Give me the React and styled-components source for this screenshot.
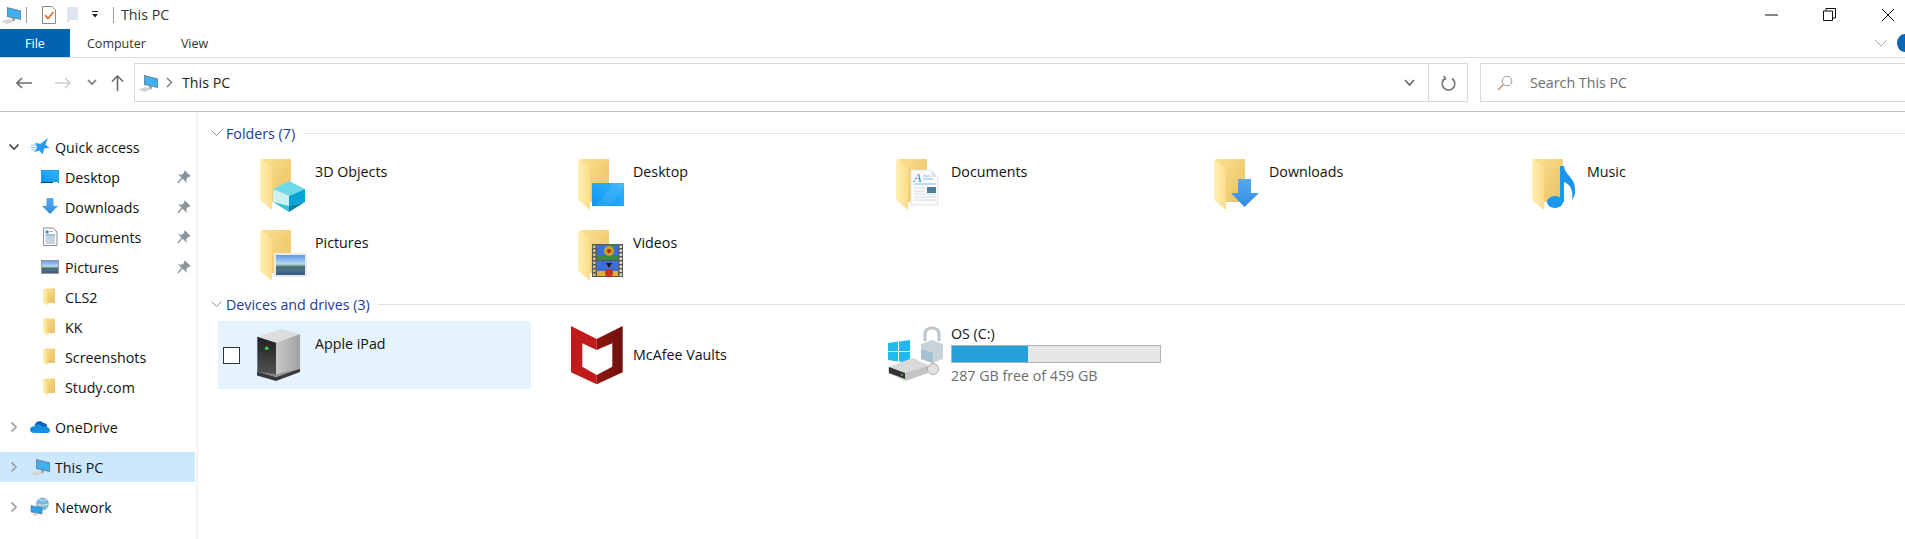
import React from 'react'
import styled, { createGlobalStyle } from 'styled-components'

const GlobalStyle = createGlobalStyle`
  html, body {
    margin: 0;
    padding: 0;
    background: #fff;
    overflow: hidden;
  }
  body {
    font-family: 'Open Sans', 'Noto Sans', sans-serif;
    color: #111;
  }
`

const Gradients = () => (
  <svg width='0' height='0' style={{ position: 'absolute' }}>
    <defs>
      <linearGradient id='fBack' x1='0' y1='0' x2='1' y2='1'>
        <stop offset='0' stopColor='#fbe08e' />
        <stop offset='1' stopColor='#e9c063' />
      </linearGradient>
      <linearGradient id='fFront' x1='0' y1='0' x2='1' y2='0'>
        <stop offset='0' stopColor='#fff0b5' />
        <stop offset='1' stopColor='#fbdc8a' />
      </linearGradient>
      <linearGradient id='screen' x1='0' y1='1' x2='1' y2='0'>
        <stop offset='0' stopColor='#0d96f2' />
        <stop offset='1' stopColor='#35b4fd' />
      </linearGradient>
      <linearGradient id='arrowBlue' x1='0' y1='0' x2='0' y2='1'>
        <stop offset='0' stopColor='#57a8ee' />
        <stop offset='1' stopColor='#2f8de4' />
      </linearGradient>
      <linearGradient id='photoSky' x1='0' y1='0' x2='0' y2='1'>
        <stop offset='0' stopColor='#5d9ae8' />
        <stop offset='.45' stopColor='#bcd8f0' />
        <stop offset='.6' stopColor='#46705f' />
        <stop offset='.75' stopColor='#4d6f95' />
        <stop offset='1' stopColor='#35587f' />
      </linearGradient>
      <linearGradient id='driveFace' x1='0' y1='0' x2='0' y2='1'>
        <stop offset='0' stopColor='#202020' />
        <stop offset='1' stopColor='#555' />
      </linearGradient>
      <linearGradient id='driveSide' x1='0' y1='0' x2='1' y2='0'>
        <stop offset='0' stopColor='#c8c8c8' />
        <stop offset='1' stopColor='#a2a2a2' />
      </linearGradient>
      <linearGradient id='vaultDark' x1='0' y1='0' x2='1' y2='0'>
        <stop offset='0' stopColor='#8f1610' />
        <stop offset='1' stopColor='#6f120d' />
      </linearGradient>
    </defs>
  </svg>
)

// ---- small drawings ----

const PcIcon = () => (
  <svg width='20' height='20' viewBox='0 0 20 20'>
    <path d='M0 16.5 L8 14 L14 16 L6 19 Z' fill='#d4d4d4' />
    <path d='M11 12.5 L14 13 L14 16 L11 15.5 Z' fill='#a8a8a8' />
    <path d='M6 2 L20 5.5 V15 L6 12 Z' fill='#6f8391' />
    <path d='M6.8 3.2 L19.2 6.2 V14 L6.8 11.2 Z' fill='#3fb0f0' />
  </svg>
)

const SmallFolder = () => (
  <svg width='20' height='20' viewBox='0 0 20 20'>
    <path d='M4 1.5 H15 V16 H7 Z' fill='url(#fBack)' />
    <path d='M3 1.5 L7.5 4 V18.5 L3 15.5 Z' fill='url(#fFront)' />
  </svg>
)

const DesktopSmall = () => (
  <svg width='20' height='20' viewBox='0 0 20 20'>
    <rect x='1' y='3' width='18' height='13' fill='#0f95ee' />
    <rect x='1.5' y='3.5' width='17' height='11' fill='url(#screen)' />
    <rect x='1' y='15' width='18' height='1' fill='#0a3f78' />
    <rect x='13' y='15' width='5' height='1' fill='#dff' />
  </svg>
)

const DownloadSmall = () => (
  <svg width='20' height='20' viewBox='0 0 20 20'>
    <path d='M6.5 1 H13.5 V9 H18 L10 17 L2 9 H6.5 Z' fill='url(#arrowBlue)' />
  </svg>
)

const DocumentSmall = () => (
  <svg width='20' height='20' viewBox='0 0 20 20'>
    <path d='M3.5 1 H13 L17 5 V18.5 H3.5 Z' fill='#fff' stroke='#8d8d8d' />
    <rect x='5.5' y='3.5' width='3' height='3' fill='#3f8fd6' />
    <path d='M9.5 4.5 H12.5 M5.5 8 H15 M5.5 10 H15 M5.5 12 H15 M5.5 14 H15 M5.5 16 H15' stroke='#8fa7c0' />
    <path d='M5.5 8 H15' stroke='#5cb2ee' />
  </svg>
)

const PictureSmall = () => (
  <svg width='20' height='20' viewBox='0 0 20 20'>
    <rect x='1.5' y='3.5' width='17' height='13' fill='url(#photoSky)' stroke='#9a9a9a' />
  </svg>
)

const PinIcon = () => (
  <svg width='14' height='14' viewBox='0 0 14 14'>
    <path d='M1 13 L5 8 M8 1.5 L12.5 6 L10.5 6.5 L8.5 9.5 L8.8 11 L3 5.2 L4.5 5.5 L7.5 3.5 Z' fill='#8b959d' stroke='#8b959d' strokeWidth='1.3' />
  </svg>
)

const StarIcon = () => (
  <svg width='20' height='20' viewBox='0 0 20 20'>
    <path d='M18 1 L15.5 7.5 L19.5 11 L14.5 11.2 L12.5 17.5 L9.5 13.5 L4 15 L7 10.5 L5 6 L10.5 6.8 Z' fill='#2a9bf0' />
    <path d='M1 8 H7 M.5 10.5 H6 M1.5 13 H6' stroke='#8fc8f2' strokeWidth='1' />
  </svg>
)

const CloudIcon = () => (
  <svg width='20' height='20' viewBox='0 0 20 20'>
    <path d='M4.5 9 C5 5 10 2.5 13.5 6 C15.5 6 17 7 17.3 9 L9 14 Z' fill='#0a5fb8' />
    <path d='M4 16 C1.5 16 0 14.5 0 12.6 C0 10.5 2 9 4.5 9.2 C7 6 11 7 12.5 9.8 C15 8.6 20 10 20 13.5 C20 15 19 16 17.5 16 Z' fill='#1490df' />
  </svg>
)

const NetworkIcon = () => (
  <svg width='20' height='20' viewBox='0 0 20 20'>
    <circle cx='12.5' cy='7' r='6.5' fill='#7fb7d9' />
    <path d='M9 2.5 C12 4 15 3 16.5 3 M7 7 C11 9 15 8 19 7' stroke='#dcecf5' fill='none' />
    <path d='M1 8.5 L12 11 V17 L1 15 Z' fill='#2aa1e8' stroke='#5b6b77' strokeWidth='.6' />
    <path d='M4 16 L9 17 L6 19 L2.5 18 Z' fill='#d6d6d6' />
  </svg>
)

const Chevron = ({ open, light }) => (
  <svg width='12' height='12' viewBox='0 0 12 12'>
    {open ? (
      <path d='M1.5 3.5 L6 8 L10.5 3.5' fill='none' stroke='#444' strokeWidth='1.6' />
    ) : (
      <path d='M3.5 1.5 L8 6 L3.5 10.5' fill='none' stroke={light ? '#a6a6a6' : '#777'} strokeWidth='1.8' />
    )}
  </svg>
)

// ---- big folder drawings ----

const Folder = ({ children }) => (
  <svg width='64' height='64' viewBox='0 0 64 64'>
    <path d='M11 7 H40 V50 H20 Z' fill='url(#fBack)' />
    <path d='M9 7 L21 15 V58 L9 48 Z' fill='url(#fFront)' />
    {children}
  </svg>
)

const cube = (
  <g>
    <path d='M38 29 L54 37 V52 L38 60 L22 52 V37 Z' fill='#fff' opacity='.3' />
    <path d='M22 37 L38 29 L54 37 L38 44 Z' fill='#6fd9e8' />
    <path d='M22 37 L38 44 V54 L22 50 Z' fill='#cdf0f2' />
    <path d='M54 37 L38 44 V54 L54 50 Z' fill='#05a5d4' />
    <path d='M22 50 L38 54 V60 Z' fill='#35c4dc' />
    <path d='M54 50 L38 54 V60 Z' fill='#0782ac' />
  </g>
)

const screenBig = (
  <g>
    <rect x='23' y='31' width='32' height='23' fill='url(#screen)' />
    <path d='M27 54 L44 31 H55 V35 L40 54 Z' fill='#fff' opacity='.08' />
  </g>
)

const docBig = (
  <g>
    <path d='M24 18 H44 L51 25 V53 H24 Z' fill='#fbfbfb' stroke='#dfe3e8' />
    <path d='M44 18 V25 H51 Z' fill='#e1e4e8' />
    <text x='26.5' y='30' fontSize='13' fontStyle='italic' fontFamily='Liberation Serif, serif' fill='#3a87d4'>A</text>
    <path d='M36 24 H43 M36 27 H46 M27 32 H49' stroke='#7cc0ee' strokeWidth='1' />
    <path d='M27 36 H38 M27 39 H38 M27 42 H49 M27 45 H49 M27 48 H49' stroke='#d5dbe2' strokeWidth='1' />
    <rect x='40' y='35' width='9' height='6' fill='#4f7b94' />
  </g>
)

const arrowBig = (
  <path d='M33 27 H46 V41 H54 L39.5 55 L26 41 H33 Z' fill='url(#arrowBlue)' />
)

const noteBig = (
  <g fill='#1a96ec'>
    <ellipse cx='32' cy='50' rx='8' ry='6' />
    <path d='M37 50 V14 H41 C42 24 54 26 52 41 C51.5 45 50 46 49 48 C50.5 38 47 32 41 30 V50 Z' />
  </g>
)

const photoBig = (
  <g>
    <rect x='23' y='30' width='33' height='24' fill='#e8eaec' />
    <rect x='25' y='32' width='29' height='20' fill='url(#photoSky)' />
  </g>
)

const frames = [0, 1, 2, 3, 4, 5, 6, 7]
const filmBig = (
  <g>
    <rect x='23' y='21' width='31' height='33' fill='#5a5a55' />
    {frames.map(i => (
      <g key={i}>
        <rect x='24' y={22.5 + i * 4} width='2.5' height='2.4' fill='#d8c78a' />
        <rect x='50.5' y={22.5 + i * 4} width='2.5' height='2.4' fill='#e4e4e4' />
      </g>
    ))}
    <rect x='28' y='22' width='21' height='15' fill='#3a70d8' />
    <rect x='28' y='33' width='21' height='4' fill='#3d8a45' />
    <rect x='28' y='38' width='21' height='15' fill='#3a70d8' />
    <rect x='28' y='48' width='21' height='5' fill='#e0b23a' />
    <circle cx='40' cy='28' r='5' fill='#c9a21e' />
    <circle cx='40' cy='28' r='2' fill='#b3261e' />
    <circle cx='40' cy='50' r='4' fill='#c9321e' />
    <path d='M37 40 H43 L40 45 Z' fill='#1a1a1a' />
  </g>
)

const IpadDrive = () => (
  <svg width='64' height='64' viewBox='0 0 64 64'>
    <path d='M6.3 13.7 L30.7 6 L49 11 L25 19.7 Z' fill='#dedede' />
    <path d='M6.3 13.7 L25 19.7 V53.7 L6.3 48.7 Z' fill='url(#driveFace)' />
    <path d='M25 19.7 L49 11 V45.3 L25 53.7 Z' fill='url(#driveSide)' />
    <path d='M6 48.5 L25 54 L49 45.5 V49 L25 58 L6 52.5 Z' fill='#3a3a3a' />
    <path d='M6 48.5 L25 53.5 L49 45.5 L25 51.5 Z' fill='#8a8a8a' />
    <circle cx='15.7' cy='25.3' r='1.8' fill='#39d63c' />
  </svg>
)

const McAfee = () => (
  <svg width='64' height='64' viewBox='0 0 64 64'>
    <path d='M2 3 L27.7 16 V27 L13.3 20.3 V43.7 L27.7 52 V61.3 L2 49.3 Z' fill='#c01a1a' />
    <path d='M53.7 3 L27.7 16 V27 L43.3 20.3 V43.7 L27.7 52 V61.3 L53.7 49.3 Z' fill='url(#vaultDark)' />
  </svg>
)

const OsDrive = () => (
  <svg width='64' height='64' viewBox='0 0 64 64'>
    <g fill='#1ebbee'>
      <path d='M1 20 L11 18.6 V28 H1 Z' />
      <path d='M12 18.4 L23 17 V28 H12 Z' />
      <path d='M1 29 H11 V38.4 L1 37 Z' />
      <path d='M12 29 H23 V40 L12 38.6 Z' />
    </g>
    <path d='M1 44 L26 35 L41 42 V50 L18 58 L1 50 Z' fill='#d9d9d9' />
    <path d='M2 44 L18 50 V56 L2 50 Z' fill='#333' />
    <path d='M18 50 L41 43 V50 L18 58 Z' fill='#c4c4c4' />
    <circle cx='15' cy='52' r='1' fill='#3bd14a' />
    <path d='M38 18 V11 C38 3 52 3 52 11 V18' fill='none' stroke='#bcc3c8' strokeWidth='3' />
    <path d='M34 21 L45 17 L56 21 V36 L46 40 L34 36 Z' fill='#c9d2d8' />
    <path d='M34 26 L46 30 V40 L34 36 Z' fill='#a3c0d4' />
    <circle cx='46' cy='46' r='5.5' fill='#e2e2e2' stroke='#aaa' />
  </svg>
)

// ---- layout ----

const Window = styled.div`
  width: 1905px;
  height: 539px;
  display: flex;
  flex-direction: column;
  overflow: hidden;
`

const TitleBar = styled.div`
  height: 29px;
  flex: none;
  display: flex;
  align-items: center;
  padding-left: 1px;
`

const QuickBtn = styled.span`
  display: flex;
  width: ${p => p.$w || 20}px;
  margin-left: ${p => p.$left || 0}px;
  justify-content: center;
  align-items: center;
`

const Sep = styled.span`
  width: 1px;
  height: 16px;
  background: #9c9c9c;
  margin: 0 ${p => p.$right || 7}px 0 ${p => p.$left || 5}px;
`

const TitleText = styled.span`
  font-size: 14.25px;
  color: #333;
`

const Controls = styled.div`
  margin-left: auto;
  display: flex;
  align-items: center;
  gap: 45px;
  padding-right: 10px;
`

const TabRow = styled.div`
  height: 28px;
  flex: none;
  display: flex;
  align-items: center;
  border-bottom: 1px solid #dadada;
`

const FileTab = styled.div`
  width: 70px;
  height: 28px;
  background: #0063b1;
  color: #fff;
  font-size: 12.5px;
  display: flex;
  align-items: center;
  justify-content: center;
`

const Tab = styled.div`
  font-size: 12.5px;
  color: #333;
  margin-left: ${p => p.$left}px;
`

const HelpArea = styled.div`
  margin-left: auto;
  display: flex;
  align-items: center;
  gap: 9px;
  margin-right: -7px;
`

const HelpDot = styled.div`
  width: 15px;
  height: 18px;
  border-radius: 50%;
  background: #0a66b7;
`

const NavRow = styled.div`
  height: 54px;
  flex: none;
  display: flex;
  align-items: center;
  border-bottom: 1px solid #c4c4c4;
  box-sizing: border-box;
  padding-bottom: 4px;
`

const NavBtns = styled.div`
  width: 134px;
  flex: none;
  display: flex;
  align-items: center;
`

const NavBtn = styled.span`
  display: flex;
  width: 16px;
  justify-content: center;
  margin-left: ${p => p.$left}px;
`

const AddressBox = styled.div`
  width: 1334px;
  height: 39px;
  flex: none;
  box-sizing: border-box;
  border: 1px solid #d9d9d9;
  display: flex;
  align-items: center;
  padding-left: 3px;
`

const AddressText = styled.span`
  font-size: 14.25px;
  color: #222;
  margin-left: 7px;
`

const AddressEnd = styled.div`
  margin-left: auto;
  display: flex;
  align-items: center;
  height: 100%;
`

const RefreshBtn = styled.div`
  width: 38px;
  height: 100%;
  margin-left: 13px;
  border-left: 1px solid #d9d9d9;
  display: flex;
  align-items: center;
  justify-content: center;
`

const SearchBox = styled.div`
  width: 440px;
  height: 39px;
  flex: none;
  margin-left: 12px;
  box-sizing: border-box;
  border: 1px solid #d9d9d9;
  display: flex;
  align-items: center;
  padding-left: 16px;
  gap: 17px;
  font-size: 14.25px;
  color: #6d6d6d;
`

const Body = styled.div`
  flex: 1;
  display: flex;
  min-height: 0;
`

const Sidebar = styled.nav`
  width: 196px;
  flex: none;
  padding-top: 20px;
  border-right: 2px solid #f2f2f2;
  font-size: 14.25px;
`

const Row = styled.div`
  height: 30px;
  display: flex;
  align-items: center;
  width: 195px;
  padding-left: ${p => (p.$top ? 8 : 40)}px;
  box-sizing: border-box;
  background: ${p => (p.$active ? '#cce8ff' : 'transparent')};
  margin-top: ${p => p.$gap || 0}px;
`

const RowChevron = styled.span`
  display: flex;
  width: 22px;
`

const RowLabel = styled.span`
  margin-left: 5px;
  white-space: nowrap;
`

const RowPin = styled.span`
  display: flex;
  margin-left: auto;
  margin-right: 4px;
`

const Content = styled.main`
  flex: 1;
  padding-top: 12px;
  padding-left: 20px;
`

const GroupHead = styled.div`
  height: 18px;
  display: flex;
  align-items: center;
  color: #1e3a94;
  font-size: 14.25px;
  margin-top: ${p => p.$gap || 0}px;
  &::after {
    content: '';
    flex: 1;
    height: 1px;
    background: #e2e2e2;
    margin-left: 8px;
  }
`

const GroupChevron = styled.span`
  display: flex;
  width: 15px;
  margin-left: -7px;
`

const Tiles = styled.div`
  display: grid;
  grid-template-columns: repeat(5, 318px);
  grid-auto-rows: 68px;
  row-gap: 3px;
  margin-top: ${p => p.$top}px;
`

const Tile = styled.div`
  width: 313px;
  height: 68px;
  display: flex;
  position: relative;
  background: ${p => (p.$selected ? '#e5f3ff' : 'transparent')};
  font-size: 14.25px;
`

const IconSlot = styled.span`
  width: 97px;
  flex: none;
  display: flex;
  align-items: center;
  justify-content: flex-end;
`

const TileText = styled.div`
  padding-top: ${p => p.$top || 12}px;
`

const Check = styled.span`
  position: absolute;
  left: 5px;
  top: 26px;
  width: 15px;
  height: 15px;
  border: 1px solid #333;
  background: #fff;
`

const UsageBar = styled.div`
  width: 210px;
  height: 18px;
  margin: 2px 0 3px;
  box-sizing: border-box;
  border: 1px solid #b5b5b5;
  background: #e6e6e6;
`

const UsageFill = styled.div`
  height: 100%;
  background: #26a0da;
`

const FreeText = styled.div`
  color: #6d6d6d;
`

const quickLinks = [
  { name: 'Desktop', icon: <DesktopSmall />, pinned: true },
  { name: 'Downloads', icon: <DownloadSmall />, pinned: true },
  { name: 'Documents', icon: <DocumentSmall />, pinned: true },
  { name: 'Pictures', icon: <PictureSmall />, pinned: true },
  { name: 'CLS2', icon: <SmallFolder /> },
  { name: 'KK', icon: <SmallFolder /> },
  { name: 'Screenshots', icon: <SmallFolder /> },
  { name: 'Study.com', icon: <SmallFolder /> },
]

const folders = [
  { name: '3D Objects', overlay: cube },
  { name: 'Desktop', overlay: screenBig },
  { name: 'Documents', overlay: docBig },
  { name: 'Downloads', overlay: arrowBig },
  { name: 'Music', overlay: noteBig },
  { name: 'Pictures', overlay: photoBig },
  { name: 'Videos', overlay: filmBig },
]

export default function App() {
  return (
    <Window>
      <GlobalStyle />
      <Gradients />
      <TitleBar>
        <PcIcon />
        <Sep $right={13} />
        <QuickBtn $w={18}>
          <svg width='16' height='18' viewBox='0 0 16 18'>
            <path d='M1.5 .5 H11 L14.5 4 V17.5 H1.5 Z' fill='#fff' stroke='#8a8a8a' />
            <path d='M4 9 L7 12.5 L12.5 6' fill='none' stroke='#e8602c' strokeWidth='1.6' />
          </svg>
        </QuickBtn>
        <QuickBtn $w={30}>
          <svg width='14' height='18' viewBox='0 0 14 18'>
            <path d='M1 1 H12 V14 H5 L1 17 Z' fill='#dfe6f2' />
          </svg>
        </QuickBtn>
        <QuickBtn $w={14}>
          <svg width='8' height='7' viewBox='0 0 8 7'>
            <path d='M1 0 H7 V1 H1 Z M1 3 H7 L4 6.5 Z' fill='#222' />
          </svg>
        </QuickBtn>
        <Sep $left={11} />
        <TitleText>This PC</TitleText>
        <Controls>
          <svg width='13' height='13' viewBox='0 0 13 13'>
            <path d='M0 7 H13' stroke='#111' />
          </svg>
          <svg width='13' height='13' viewBox='0 0 13 13'>
            <path d='M.5 3 H9.5 V12.5 H.5 Z M3 3 V.5 H12.5 V10 H9.5' fill='none' stroke='#111' />
          </svg>
          <svg width='14' height='14' viewBox='0 0 14 14'>
            <path d='M1 1 L13 13 M13 1 L1 13' stroke='#111' />
          </svg>
        </Controls>
      </TitleBar>
      <TabRow>
        <FileTab>File</FileTab>
        <Tab $left={17}>Computer</Tab>
        <Tab $left={35}>View</Tab>
        <HelpArea>
          <svg width='14' height='8' viewBox='0 0 14 8'>
            <path d='M1 1 L7 7 L13 1' fill='none' stroke='#a9a9a9' />
          </svg>
          <HelpDot />
        </HelpArea>
      </TabRow>
      <NavRow>
        <NavBtns>
          <NavBtn $left={16}>
            <svg width='16' height='12' viewBox='0 0 16 12'>
              <path d='M6 1 L1 6 L6 11 M1 6 H16' fill='none' stroke='#6b6b6b' strokeWidth='1.6' />
            </svg>
          </NavBtn>
          <NavBtn $left={23}>
            <svg width='16' height='12' viewBox='0 0 16 12'>
              <path d='M10 1 L15 6 L10 11 M15 6 H0' fill='none' stroke='#cfcfcf' strokeWidth='1.6' />
            </svg>
          </NavBtn>
          <NavBtn $left={13}>
            <svg width='10' height='7' viewBox='0 0 10 7'>
              <path d='M1 1 L5 5 L9 1' fill='none' stroke='#777' strokeWidth='1.6' />
            </svg>
          </NavBtn>
          <NavBtn $left={9}>
            <svg width='13' height='16' viewBox='0 0 13 16'>
              <path d='M1 6.5 L6.5 1 L12 6.5 M6.5 1 V16' fill='none' stroke='#6b6b6b' strokeWidth='1.6' />
            </svg>
          </NavBtn>
        </NavBtns>
        <AddressBox>
          <PcIcon />
          <QuickBtn $w={12} $left={5}>
            <svg width='7' height='11' viewBox='0 0 7 11'>
              <path d='M1 1 L5.5 5.5 L1 10' fill='none' stroke='#777' strokeWidth='1.4' />
            </svg>
          </QuickBtn>
          <AddressText>This PC</AddressText>
          <AddressEnd>
            <svg width='11' height='8' viewBox='0 0 11 8'>
              <path d='M1 1 L5.5 6 L10 1' fill='none' stroke='#666' strokeWidth='1.6' />
            </svg>
            <RefreshBtn>
              <svg width='15' height='16' viewBox='0 0 15 16'>
                <path d='M4 3.5 A6.3 6.3 0 1 0 11 3.5 M3 1 L4.5 3.8 L1.5 5' fill='none' stroke='#777' strokeWidth='1.6' />
              </svg>
            </RefreshBtn>
          </AddressEnd>
        </AddressBox>
        <SearchBox>
          <svg width='16' height='16' viewBox='0 0 16 16'>
            <circle cx='10' cy='6' r='4.8' fill='none' stroke='#999' />
            <path d='M6.5 9.5 L1 15' stroke='#b98a5a' strokeWidth='1.2' />
          </svg>
          Search This PC
        </SearchBox>
      </NavRow>
      <Body>
        <Sidebar>
          <Row $top>
            <RowChevron><Chevron open /></RowChevron>
            <StarIcon />
            <RowLabel>Quick access</RowLabel>
          </Row>
          {quickLinks.map(link => (
            <Row key={link.name}>
              {link.icon}
              <RowLabel>{link.name}</RowLabel>
              {link.pinned && <RowPin><PinIcon /></RowPin>}
            </Row>
          ))}
          <Row $top $gap={10}>
            <RowChevron><Chevron light /></RowChevron>
            <CloudIcon />
            <RowLabel>OneDrive</RowLabel>
          </Row>
          <Row $top $active $gap={10}>
            <RowChevron><Chevron light /></RowChevron>
            <PcIcon />
            <RowLabel>This PC</RowLabel>
          </Row>
          <Row $top $gap={10}>
            <RowChevron><Chevron light /></RowChevron>
            <NetworkIcon />
            <RowLabel>Network</RowLabel>
          </Row>
        </Sidebar>
        <Content>
          <GroupHead>
            <GroupChevron>
              <svg width='11' height='7' viewBox='0 0 11 7'>
                <path d='M.5 .5 L5.5 5.5 L10.5 .5' fill='none' stroke='#8a8a8a' />
              </svg>
            </GroupChevron>
            Folders (7)
          </GroupHead>
          <Tiles $top={8}>
            {folders.map(f => (
              <Tile key={f.name}>
                <IconSlot><Folder>{f.overlay}</Folder></IconSlot>
                <TileText>{f.name}</TileText>
              </Tile>
            ))}
          </Tiles>
          <GroupHead $gap={6}>
            <GroupChevron>
              <svg width='11' height='7' viewBox='0 0 11 7'>
                <path d='M.5 .5 L5.5 5.5 L10.5 .5' fill='none' stroke='#8a8a8a' />
              </svg>
            </GroupChevron>
            Devices and drives (3)
          </GroupHead>
          <Tiles $top={8}>
            <Tile $selected>
              <Check />
              <IconSlot><IpadDrive /></IconSlot>
              <TileText $top={13}>Apple iPad</TileText>
            </Tile>
            <Tile>
              <IconSlot><McAfee /></IconSlot>
              <TileText $top={24}>McAfee Vaults</TileText>
            </Tile>
            <Tile>
              <IconSlot><OsDrive /></IconSlot>
              <TileText $top={3}>
                OS (C:)
                <UsageBar><UsageFill style={{ width: `${(77 / 210) * 100}%` }} /></UsageBar>
                <FreeText>287 GB free of 459 GB</FreeText>
              </TileText>
            </Tile>
          </Tiles>
        </Content>
      </Body>
    </Window>
  )
}
